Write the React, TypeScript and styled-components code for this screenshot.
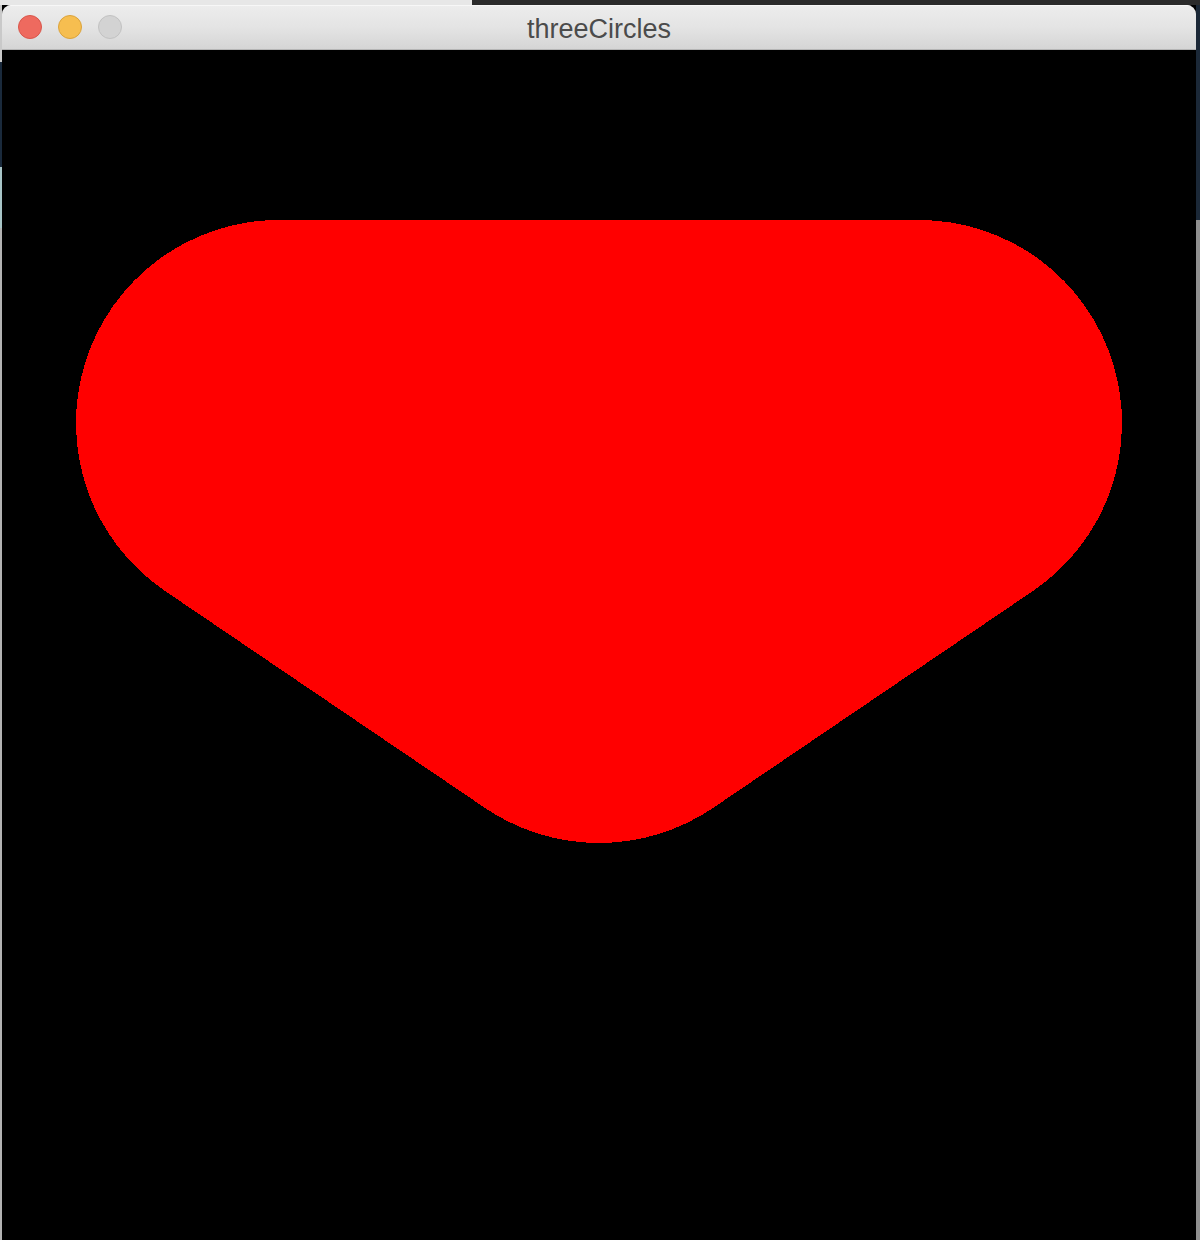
import React from "react";
import styled, { createGlobalStyle } from "styled-components";

const GlobalStyle = createGlobalStyle`
  html, body {
    margin: 0;
    padding: 0;
    background: #000;
  }
  #root {
    width: 1200px;
    height: 1240px;
  }
`;

const Desktop = styled.div`
  box-sizing: border-box;
  width: 1200px;
  height: 1240px;
  overflow: hidden;
  padding: 5px 4px 0 2px;
  display: flex;
  background:
    linear-gradient(to right, #e7e7e7 0 472px, #2b2b2b 472px) top left / 100% 5px no-repeat,
    linear-gradient(to bottom, #c9c9c9 0 62px, #1a2a3c 62px 167px, #a8c5c7 167px 228px, #b3b3b3 228px) top left / 2px 100% no-repeat,
    linear-gradient(to bottom, #2b2b2b 0 5px, #1b2837 5px 220px, #8f8f8f 220px) top right / 4px 100% no-repeat,
    #000;
`;

const Window = styled.div`
  flex: 1;
  display: flex;
  flex-direction: column;
  border-radius: 9px 9px 0 0;
  overflow: hidden;
  background: #000;
`;

const TitleBar = styled.div`
  position: relative;
  height: 44px;
  flex: none;
  display: flex;
  align-items: center;
  padding-left: 16px;
  gap: 16px;
  background: linear-gradient(to bottom, #ededed 0%, #e4e4e4 50%, #d5d5d5 100%);
  border-bottom: 1px solid #b5b5b5;
  box-shadow: inset 0 1px 0 #f7f7f7;
`;

const Light = styled.span<{ $fill: string; $ring: string }>`
  box-sizing: border-box;
  width: 24px;
  height: 24px;
  border-radius: 50%;
  background: ${(p) => p.$fill};
  border: 1px solid ${(p) => p.$ring};
  flex: none;
`;

const Title = styled.div`
  position: absolute;
  left: 0;
  right: 0;
  top: 0;
  bottom: 0;
  display: flex;
  align-items: center;
  justify-content: center;
  padding-top: 4px;
  font-family: "Liberation Sans", Arial, sans-serif;
  font-size: 27px;
  color: #4b4b4b;
  pointer-events: none;
`;

const Canvas = styled.div`
  flex: 1;
  background: #000;
  display: flex;
`;

const R = 203;
const A = { x: 277, y: 373 };
const B = { x: 917, y: 373 };
const C = { x: 597, y: 590 };

function hullPath() {
  const dx = C.x - A.x;
  const dy = C.y - A.y;
  const len = Math.hypot(dx, dy);
  const nlx = -dy / len;
  const nly = dx / len;
  const dx2 = C.x - B.x;
  const dy2 = C.y - B.y;
  const len2 = Math.hypot(dx2, dy2);
  const nrx = dy2 / len2;
  const nry = -dx2 / len2;
  const p1 = { x: A.x + R * nlx, y: A.y + R * nly };
  const p2 = { x: C.x + R * nlx, y: C.y + R * nly };
  const q1 = { x: B.x + R * nrx, y: B.y + R * nry };
  const q2 = { x: C.x + R * nrx, y: C.y + R * nry };
  const f = (n: number) => n.toFixed(2);
  return [
    `M ${f(A.x)} ${f(A.y - R)}`,
    `L ${f(B.x)} ${f(B.y - R)}`,
    `A ${R} ${R} 0 0 1 ${f(q1.x)} ${f(q1.y)}`,
    `L ${f(q2.x)} ${f(q2.y)}`,
    `A ${R} ${R} 0 0 1 ${f(p2.x)} ${f(p2.y)}`,
    `L ${f(p1.x)} ${f(p1.y)}`,
    `A ${R} ${R} 0 0 1 ${f(A.x)} ${f(A.y - R)}`,
    "Z",
  ].join(" ");
}

export default function App() {
  return (
    <>
      <GlobalStyle />
      <Desktop>
        <Window>
          <TitleBar>
            <Light $fill="#ee6a5f" $ring="#d9564b" />
            <Light $fill="#f6be50" $ring="#dba33b" />
            <Light $fill="#d3d3d3" $ring="#c2c2c2" />
            <Title>threeCircles</Title>
          </TitleBar>
          <Canvas>
            <svg width="1194" height="1190" viewBox="0 0 1194 1190" shapeRendering="crispEdges">
              <path d={hullPath()} fill="#ff0000" />
            </svg>
          </Canvas>
        </Window>
      </Desktop>
    </>
  );
}
